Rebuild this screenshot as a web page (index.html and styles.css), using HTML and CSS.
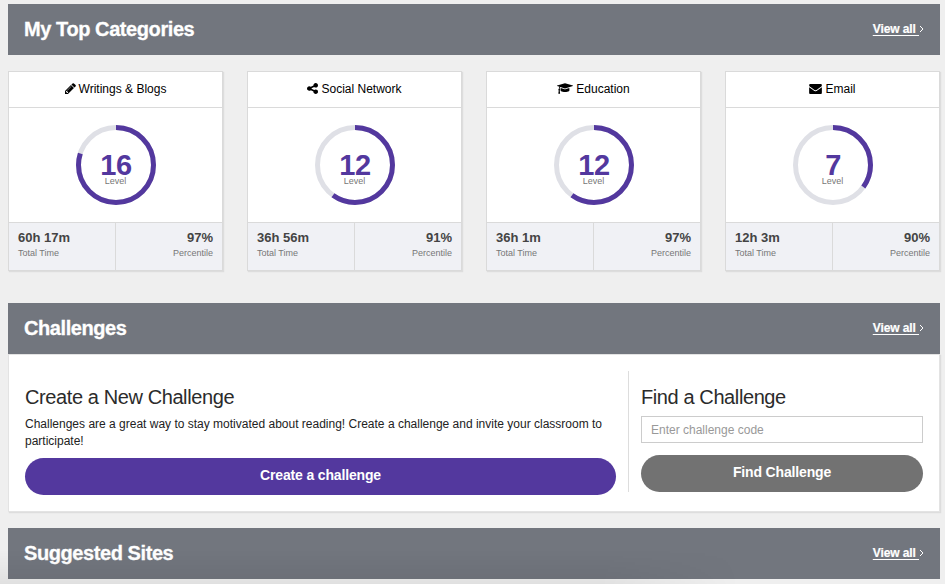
FILE: index.html
```html
<!DOCTYPE html>
<html lang="en">
<head>
<meta charset="utf-8">
<title>Dashboard</title>
<link rel="stylesheet" href="styles.css">
</head>
<body>
<main class="page">
  <section class="bar">
    <h2 class="bar-title">My Top Categories</h2>
    <div class="view"><a class="view-link">View all&nbsp;</a><svg class="chevron" viewBox="0 0 5 8"><path d="M1 1l3 3-3 3"/></svg></div>
  </section>

  <div class="cards">
    <article class="card">
      <header class="card-head">
        <svg class="icon pencil" viewBox="0 0 1536 1536"><path d="M363 1408l91-91-235-235-91 91v107h128v128h107zM886 480q0-22-22-22-10 0-17 7l-542 542q-7 7-7 17 0 22 22 22 10 0 17-7l542-542q7-7 7-17zM832 288l416 416-832 832H0v-416zM1515 384q0 53-37 90l-166 166-416-416 166-165q36-38 90-38 53 0 91 38l235 234q37 39 37 91z"/></svg>
        <span>Writings &amp; Blogs</span>
      </header>
      <div class="gauge">
        <svg class="ring" viewBox="0 0 80 80"><circle class="track" cx="40" cy="40" r="37.5"/><circle class="value" cx="40" cy="40" r="37.5" pathLength="100" stroke-dasharray="80 100"/></svg>
        <div class="level"><b>16</b><span>Level</span></div>
      </div>
      <footer class="stats"><div class="stat"><b>60h 17m</b><span>Total Time</span></div><div class="stat right"><b>97%</b><span>Percentile</span></div></footer>
    </article>
    <article class="card">
      <header class="card-head">
        <svg class="icon share" viewBox="0 0 1536 1536"><path d="M1216 896q133 0 226.500 93.500t93.500 226.500-93.500 226.500-226.500 93.500-226.500-93.500-93.500-226.500q0-12 2-34l-360-180q-92 86-218 86-133 0-226.500-93.500T0 768t93.500-226.500T320 448q126 0 218 86l360-180q-2-22-2-34 0-133 93.500-226.500T1216 0t226.500 93.500T1536 320t-93.500 226.500T1216 640q-126 0-218-86L638 734q2 22 2 34t-2 34l360 180q92-86 218-86z"/></svg>
        <span>Social Network</span>
      </header>
      <div class="gauge">
        <svg class="ring" viewBox="0 0 80 80"><circle class="track" cx="40" cy="40" r="37.5"/><circle class="value" cx="40" cy="40" r="37.5" pathLength="100" stroke-dasharray="60 100"/></svg>
        <div class="level"><b>12</b><span>Level</span></div>
      </div>
      <footer class="stats"><div class="stat"><b>36h 56m</b><span>Total Time</span></div><div class="stat right"><b>91%</b><span>Percentile</span></div></footer>
    </article>
    <article class="card">
      <header class="card-head">
        <svg class="icon cap" viewBox="0 0 2304 1536"><path d="M1774 708l18 316q4 69-82 128t-235 93.500-323 34.500-323-34.500-235-93.500-82-128l18-316 574 181q22 7 48 7t48-7zM2304 384q0 23-22 31l-1120 352q-4 1-10 1t-10-1L490 561q-43 34-71 111.500T385 851q63 36 63 109 0 69-58 107l58 433q2 14-8 25-9 11-24 11H224q-15 0-24-11-10-11-8-25l58-433q-58-38-58-107 0-73 65-111 11-207 98-330L22 415q-22-8-22-31t22-31L1142 1q4-1 10-1t10 1l1120 352q22 8 22 31z"/></svg>
        <span>Education</span>
      </header>
      <div class="gauge">
        <svg class="ring" viewBox="0 0 80 80"><circle class="track" cx="40" cy="40" r="37.5"/><circle class="value" cx="40" cy="40" r="37.5" pathLength="100" stroke-dasharray="60 100"/></svg>
        <div class="level"><b>12</b><span>Level</span></div>
      </div>
      <footer class="stats"><div class="stat"><b>36h 1m</b><span>Total Time</span></div><div class="stat right"><b>97%</b><span>Percentile</span></div></footer>
    </article>
    <article class="card">
      <header class="card-head">
        <svg class="icon mail" viewBox="0 0 1792 1408"><path d="M1792 454v794q0 66-47 113t-113 47H160q-66 0-113-47T0 1248V454q44 49 101 87 362 246 497 345 57 42 92.500 65.500t94.500 48 110 24.500h2q51 0 110-24.500t94.500-48T1194 886q170-123 498-345 57-39 100-87zM1792 160q0 79-49 151t-122 123q-376 261-468 325-10 7-42.500 30.500t-54 38-52 32.500-57.500 27-50 9h-2q-23 0-50-9t-57.500-27-52-32.500-54-38T639 759q-91-64-262-182.500T172 434q-62-42-117-115.500T0 182q0-78 41.500-130T160 0h1472q65 0 112.500 47t47.500 113z"/></svg>
        <span>Email</span>
      </header>
      <div class="gauge">
        <svg class="ring" viewBox="0 0 80 80"><circle class="track" cx="40" cy="40" r="37.5"/><circle class="value" cx="40" cy="40" r="37.5" pathLength="100" stroke-dasharray="35 100"/></svg>
        <div class="level"><b>7</b><span>Level</span></div>
      </div>
      <footer class="stats"><div class="stat"><b>12h 3m</b><span>Total Time</span></div><div class="stat right"><b>90%</b><span>Percentile</span></div></footer>
    </article>
  </div>

  <section class="bar">
    <h2 class="bar-title">Challenges</h2>
    <div class="view"><a class="view-link">View all&nbsp;</a><svg class="chevron" viewBox="0 0 5 8"><path d="M1 1l3 3-3 3"/></svg></div>
  </section>
  <div class="panel">
    <div class="create">
      <h3>Create a New Challenge</h3>
      <p>Challenges are a great way to stay motivated about reading! Create a challenge and invite your classroom to<br>participate!</p>
      <button class="btn">Create a challenge</button>
    </div>
    <div class="find">
      <h3>Find a Challenge</h3>
      <input class="code" type="text" placeholder="Enter challenge code">
      <button class="btn gray">Find Challenge</button>
    </div>
  </div>

  <section class="bar">
    <h2 class="bar-title">Suggested Sites</h2>
    <div class="view"><a class="view-link">View all&nbsp;</a><svg class="chevron" viewBox="0 0 5 8"><path d="M1 1l3 3-3 3"/></svg></div>
  </section>
</main>
<div class="shade"></div>
</body>
</html>
```
FILE: styles.css
```css
* { box-sizing: border-box; }
html, body { height: 100%; }
body { margin: 0; background: #efefef; font-family: "Liberation Sans", Arial, sans-serif; color: #222; overflow: hidden; }
.page { padding: 4px 5px 0 8px; }
h2, h3, p { margin: 0; font-weight: normal; }

.bar { height: 51px; background: #72767e; color: #fff; display: flex; align-items: center; justify-content: space-between; padding: 0 16px 2px; }
.bar-title { font-size: 20px; line-height: 24px; font-weight: bold; letter-spacing: -0.42px; -webkit-text-stroke: 0.3px #fff; }
.view { display: flex; align-items: center; font-size: 12px; font-weight: bold; line-height: 16px; letter-spacing: -0.1px; -webkit-text-stroke: 0.2px #fff; }
.view-link { text-decoration: underline; text-underline-offset: 2px; }
.chevron { width: 5px; height: 8px; fill: none; stroke: #fff; stroke-width: 1; }

.cards { display: grid; grid-template-columns: repeat(4, 215px); column-gap: 24px; margin: 16px 0 32px; }
.card { height: 200px; background: #fff; border: 1px solid #dadada; box-shadow: 1px 1px 1px #ddd; display: flex; flex-direction: column; }
.card-head { height: 36px; padding-bottom: 2px; border-bottom: 1px solid #dadada; display: flex; align-items: center; justify-content: center; gap: 3px; font-size: 12px; line-height: 16px; color: #000; }
.icon { fill: #000; }
.pencil { width: 11px; height: 11px; }
.share { width: 11px; height: 11px; }
.cap { width: 16px; height: 11px; }
.mail { width: 13px; height: 10px; }
.gauge { height: 114px; display: grid; place-items: center; }
.gauge > * { grid-area: 1 / 1; }
.ring { width: 80px; height: 80px; transform: rotate(-90deg); fill: none; stroke-width: 5; }
.track { stroke: #dfe0e6; }
.value { stroke: #53389e; }
.level { display: flex; flex-direction: column; align-items: center; padding-top: 7px; }
.level b { font-size: 29px; line-height: 28px; padding-left: 1px; letter-spacing: -0.4px; color: #53389e; }
.level span { font-size: 9px; line-height: 10px; margin-top: -3px; color: #777; }
.stats { flex: 1; display: flex; background: #f0f1f5; border-top: 1px solid #dadada; }
.stat { flex: 1; display: flex; flex-direction: column; padding: 7px 9px 0; }
.stat.right { border-left: 1px solid #dadada; text-align: right; }
.stat b { font-size: 13px; line-height: 16px; color: #444; }
.stat span { font-size: 9px; line-height: 14px; color: #777; }

.panel { height: 158px; margin-bottom: 16px; background: #fff; border: 1px solid #e3e3e3; box-shadow: 1px 1px 1px #ddd; display: flex; padding: 16px 16px 0; }
.create { width: 604px; height: 121px; padding: 14px 12px 0 0; border-right: 1px solid #ddd; }
.find { flex: 1; padding: 14px 0 0 12px; }
h3 { font-size: 20px; line-height: 24px; color: #2b2b2b; letter-spacing: -0.4px; }
p { font-size: 12px; line-height: 17px; margin: 7px 0 8px; color: #222; white-space: nowrap; }
.btn { display: block; width: 100%; height: 37px; padding: 0 0 4px; border: 0; border-radius: 19px; background: #53389e; color: #fff; font: bold 14px/20px "Liberation Sans", Arial, sans-serif; letter-spacing: -0.15px; }
.gray { background: #727272; }
.code { display: block; width: 100%; height: 27px; margin: 7px 0 12px; padding: 0 9px; border: 1px solid #ccc; font: 12px/16px "Liberation Sans", Arial, sans-serif; }
.code::placeholder { color: #999; opacity: 1; }
.shade { position: absolute; left: 0; right: 0; bottom: 0; height: 34px; background: linear-gradient(transparent, rgba(0, 0, 0, .06)); mask-image: linear-gradient(to right, #000 600px, transparent 740px); }
```
